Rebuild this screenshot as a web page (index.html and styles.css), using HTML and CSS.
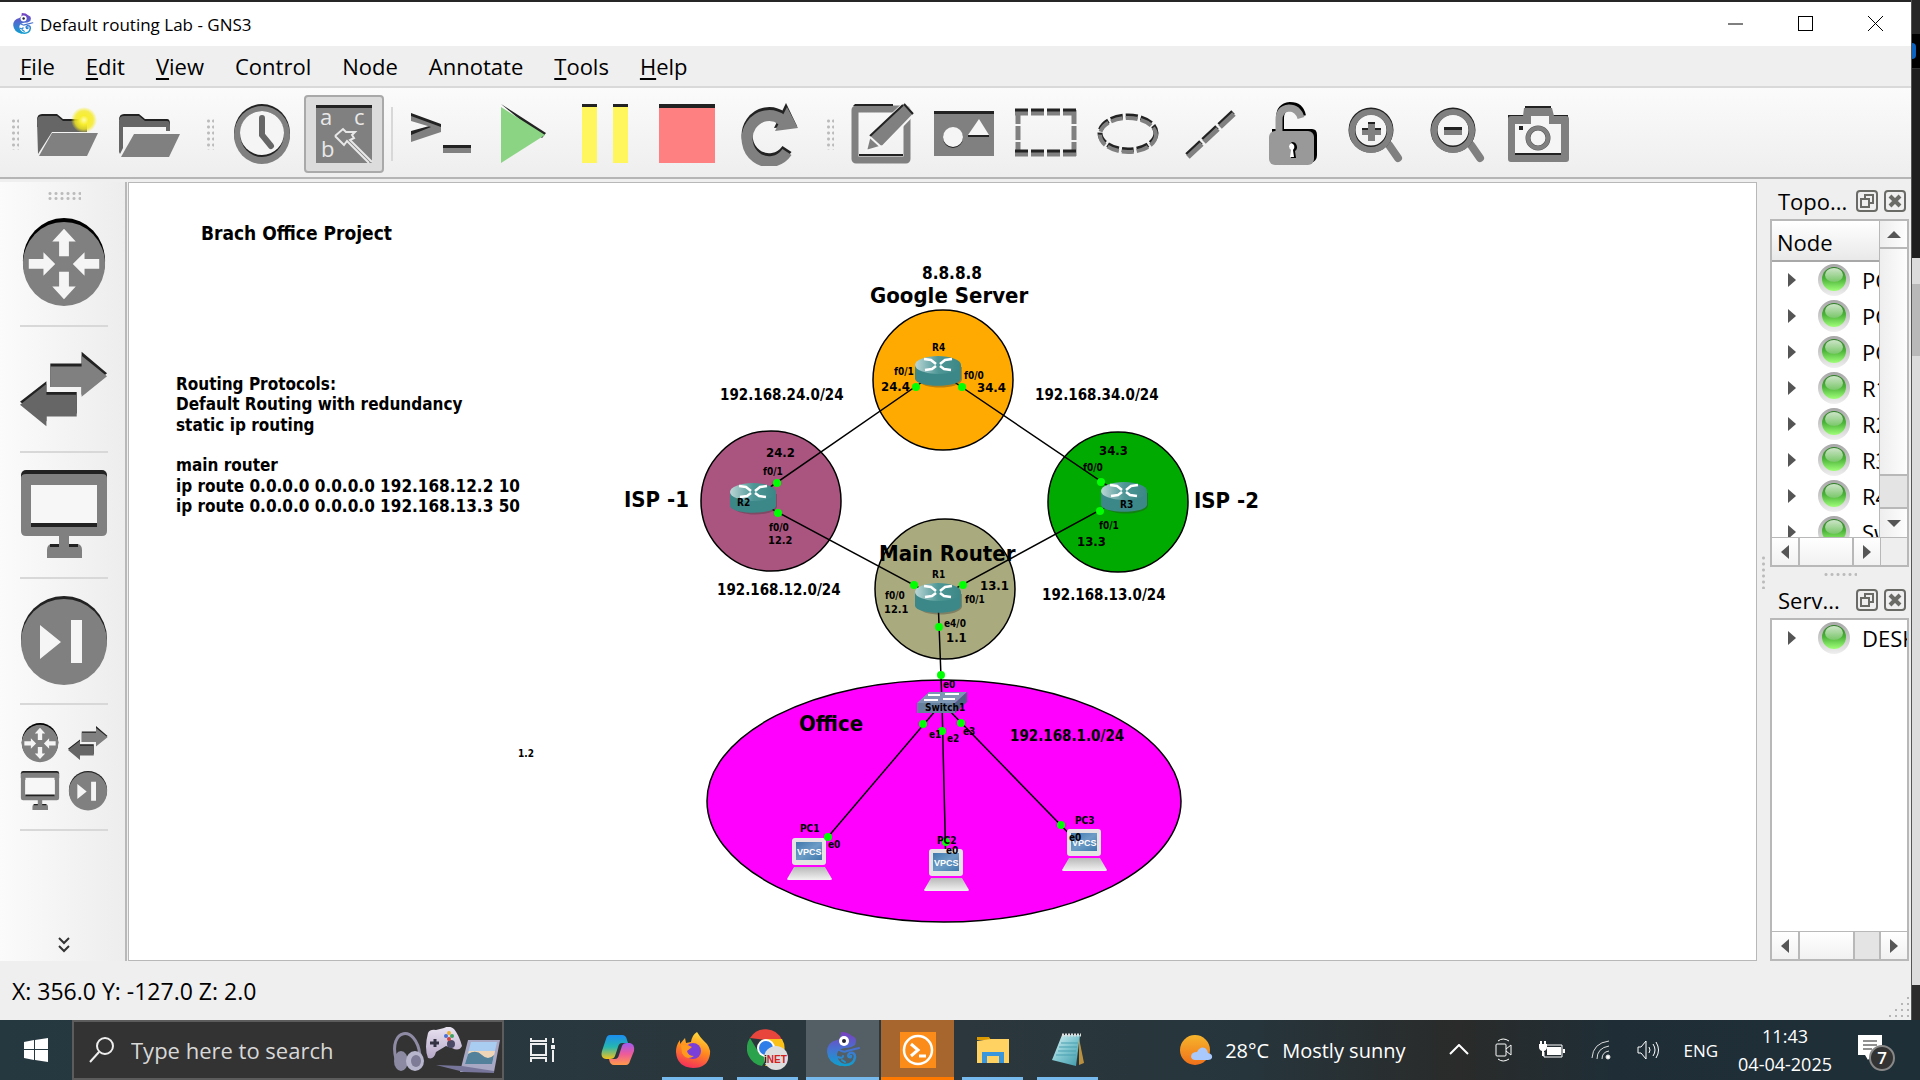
FILE: index.html
```html
<!DOCTYPE html>
<html lang="en">
<head>
<meta charset="utf-8">
<title>Default routing Lab - GNS3</title>
<link rel="stylesheet" href="styles.css">
</head>
<body>
<svg class="defs" aria-hidden="true">
  <defs>
    <linearGradient id="gCham" gradientUnits="userSpaceOnUse" x1="0" y1="0" x2="0" y2="36"><stop offset="0" stop-color="#7a3fc0"/><stop offset=".45" stop-color="#4a6fd0"/><stop offset="1" stop-color="#08a5cf"/></linearGradient>
    <linearGradient id="gRouter" x1="0" y1="0" x2="1" y2="0"><stop offset="0" stop-color="#bcd6d6"/><stop offset=".5" stop-color="#4f9797"/><stop offset="1" stop-color="#3b8686"/></linearGradient>
    <linearGradient id="gLed" x1="0" y1="0" x2="0" y2="1"><stop offset="0" stop-color="#2f7d27"/><stop offset=".5" stop-color="#4db53a"/><stop offset="1" stop-color="#a0ff7a"/></linearGradient>
    <linearGradient id="gShine" x1="0" y1="0" x2="0" y2="1"><stop offset="0" stop-color="#e8f5e4"/><stop offset="1" stop-color="#7fc870"/></linearGradient>
    <linearGradient id="gRing" x1="0" y1="0" x2="0" y2="1"><stop offset="0" stop-color="#a6a6a6"/><stop offset="1" stop-color="#efefef"/></linearGradient>
    <linearGradient id="gScreen" x1="0" y1="0" x2="1" y2="1"><stop offset="0" stop-color="#3f78ad"/><stop offset=".5" stop-color="#6c9cc6"/><stop offset="1" stop-color="#3f78ad"/></linearGradient>
    <linearGradient id="gBase" x1="0" y1="0" x2="0" y2="1"><stop offset="0" stop-color="#b9b9b9"/><stop offset="1" stop-color="#f2f2f2"/></linearGradient>
    <radialGradient id="gGlow"><stop offset="0" stop-color="#fffbb0"/><stop offset=".35" stop-color="#f8ee30"/><stop offset=".7" stop-color="#f5ea20" stop-opacity=".8"/><stop offset="1" stop-color="#f5ea20" stop-opacity="0"/></radialGradient>
    <linearGradient id="gSun" x1="0" y1="0" x2="0" y2="1"><stop offset="0" stop-color="#f6b52c"/><stop offset="1" stop-color="#f0701a"/></linearGradient>
    <linearGradient id="gFox" x1=".7" y1="0" x2=".4" y2="1"><stop offset="0" stop-color="#ffdf3c"/><stop offset=".5" stop-color="#ff8a1e"/><stop offset="1" stop-color="#f5305a"/></linearGradient>
    <linearGradient id="gCopA" x1="0" y1="0" x2="0" y2="1"><stop offset="0" stop-color="#1b8df0"/><stop offset=".5" stop-color="#25b6b0"/><stop offset="1" stop-color="#f3c21c"/></linearGradient>
    <linearGradient id="gCopB" x1="0" y1="0" x2="0" y2="1"><stop offset="0" stop-color="#a05af0"/><stop offset=".5" stop-color="#ee5a9a"/><stop offset="1" stop-color="#ff9a4a"/></linearGradient>
    <linearGradient id="gNote" x1="0" y1="0" x2="1" y2="1"><stop offset="0" stop-color="#dff3f6"/><stop offset=".5" stop-color="#7fc6d0"/><stop offset="1" stop-color="#3f98a8"/></linearGradient>
    <linearGradient id="gPad" x1="0" y1="0" x2="0" y2="1"><stop offset="0" stop-color="#eae4f2"/><stop offset="1" stop-color="#b6a8c8"/></linearGradient>

    <symbol id="router" viewBox="0 0 88 92">
      <ellipse cx="44" cy="44" rx="42" ry="44" fill="#000"/><ellipse cx="44" cy="47" rx="42" ry="43" fill="#808080"/>
      <path fill="#f5f5f5" d="M44 11l12 13h-7v15H39V24h-7zM44 83l12-13h-7V55H39v15h-7zM35 47L23 35v7H8v10h15v7zM53 47l12-12v7h15v10H65v7z"/>
    </symbol>
    <symbol id="switch" viewBox="0 0 90 76">
      <path fill="#222" d="M31 12h32V0l26 22-26 22V36H31z"/><path fill="#808080" d="M31 15h32V4l26 21-26 21V36H31z"/>
      <path fill="#222" d="M0 51l27-21v11h31v22H27v8z"/><path fill="#666" d="M0 54l27-21v11h31v22H27v10z"/>
    </symbol>
    <symbol id="monitor" viewBox="0 0 88 90">
      <rect x="1" y="0" width="86" height="20" rx="5" fill="#222"/>
      <path fill="#808080" fill-rule="evenodd" d="M1 8q0-4 5-4h76q5 0 5 4v53q0 5-5 5H49v8h9q4 1 4 6v8H27v-8q0-5 4-6h8v-8H6q-5 0-5-5zM11 15v41h66V15z"/>
      <path fill="#f7f7f7" d="M11 15h66v38H11z"/>
      <path fill="#222" d="M11 53h66v4H11zM30 74h9v3h-9zM49 74h9v3h-9z"/>
    </symbol>
    <symbol id="vcr" viewBox="0 0 88 90">
      <ellipse cx="44" cy="43" rx="43" ry="43" fill="#222"/><ellipse cx="44" cy="46" rx="43" ry="43" fill="#808080"/>
      <path fill="#f5f5f5" d="M20 29l21 17-21 17zM51 24h11v43H51z"/>
    </symbol>
    <symbol id="node-router" viewBox="0 0 48 32">
      <path fill="#333" opacity=".35" d="M3 11v13c3 10 41 10 44 0V11z"/>
      <path fill="#3c8888" d="M0 9v14c2 9 44 9 46 0V9z"/><ellipse cx="23" cy="9" rx="23" ry="9" fill="url(#gRouter)"/>
      <path d="M9 3l7 1 5 4M37 3l-7 1-5 4M10 14l7-1 4-3M36 14l-7-1-4-3" fill="none" stroke="#fff" stroke-width="2.5"/>
    </symbol>
    <symbol id="node-pc" viewBox="0 0 45 42">
      <rect x="5" y="0" width="34" height="27" rx="3" fill="#e4e4e4"/><rect x="9" y="4" width="26" height="18" fill="url(#gScreen)"/>
      <path fill="url(#gBase)" d="M7 29h31l7 12q0 1-2 1H2q-2 0-2-1z"/>
    </symbol>
    <symbol id="led" viewBox="0 0 32 32">
      <circle cx="16" cy="16" r="16" fill="url(#gRing)"/><circle cx="16" cy="15" r="12" fill="url(#gLed)"/><ellipse cx="16" cy="11" rx="9" ry="7" fill="url(#gShine)" opacity=".85"/>
    </symbol>
    <symbol id="gns" viewBox="0 0 36 36">
      <path fill="url(#gCham)" d="M16 0q7 0 11 4 4 1 4 5l-1 4q-4 3-10 3-7 1-8 6 0 6 6 10-1 2-3 2Q3 31 2 20 2 10 12 8q4-1 4-8z"/>
      <g fill="none" stroke="url(#gCham)" stroke-linecap="round"><path d="M10 25q3 8 10 8 9 0 10-8 0-5-5-4-3 2-1 4 2 1 2-1" stroke-width="2.5"/><path d="M13 17q5 4 9 2l12-3M13 25q5 2 5-1M17 28l3 2" stroke-width="2"/></g>
      <circle cx="19" cy="9" r="5" fill="#fff"/><circle cx="19" cy="9" r="2" fill="#223"/>
    </symbol>
    <symbol id="float" viewBox="0 0 22 22"><rect x="1" y="1" width="20" height="20" rx="3" fill="none" stroke="#6a6a66" stroke-width="2"/><path d="M9 9V5h8v8h-4M5 9h8v8H5z" fill="none" stroke="#6a6a66" stroke-width="2"/></symbol>
    <symbol id="close" viewBox="0 0 22 22"><rect x="1" y="1" width="20" height="20" rx="3" fill="none" stroke="#6a6a66" stroke-width="2"/><path d="M6 6l10 10M16 6L6 16" stroke="#6a6a66" stroke-width="4"/></symbol>
  </defs>
</svg>

<div class="desktop">
  <div class="window">
    <header class="titlebar">
      <svg class="app-icon" aria-hidden="true"><use href="#gns"/></svg>
      <h1>Default routing Lab - GNS3</h1>
      <div class="window-buttons">
        <button aria-label="Minimize"><svg width="16" height="16"><path d="M0 8h15" stroke="#000"/></svg></button>
        <button aria-label="Maximize"><svg width="16" height="16"><rect x=".5" y=".5" width="14" height="14" fill="none" stroke="#000"/></svg></button>
        <button aria-label="Close"><svg width="16" height="16"><path d="M0 0l15 15M15 0L0 15" stroke="#000"/></svg></button>
      </div>
    </header>

    <nav class="menubar">
      <button><u>F</u>ile</button><button><u>E</u>dit</button><button><u>V</u>iew</button><button>Control</button><button>Node</button><button>Annotate</button><button><u>T</u>ools</button><button><u>H</u>elp</button>
    </nav>

    <div class="toolbar">
      <span class="grip"></span>
      <div class="tools">
        <button aria-label="New project"><svg viewBox="0 0 64 64"><path fill="#222" d="M2 18q0-6 5-6h15l6 5h22v8H2z"/><path fill="#666" d="M2 19q0-5 5-5h15l6 5h24v11H17L3 52z"/><path fill="#808080" d="M17 31h46L52 54H4z"/><circle cx="49" cy="18" r="13" fill="url(#gGlow)"/></svg></button>
        <button aria-label="Open project"><svg viewBox="0 0 64 64"><path fill="#222" d="M2 18q0-6 5-6h15l6 5h22q3 0 3 5v5h-4v-3H9v-6z"/><path fill="#666" d="M2 19q0-5 5-5h15l6 5h22q3 0 3 5v5h-4v-4H6v21l-3 6-1-2z"/><path fill="#808080" d="M17 32h46L52 55H4z"/></svg></button>
      </div>
      <span class="grip"></span>
      <div class="tools">
        <button aria-label="Snapshots"><svg viewBox="0 0 64 64"><ellipse cx="32" cy="31" rx="28" ry="29" fill="#222"/><ellipse cx="32" cy="33" rx="28" ry="29" fill="#808080"/><ellipse cx="32" cy="32" rx="22" ry="23" fill="#222"/><ellipse cx="32" cy="31" rx="22" ry="22" fill="#f5f5f5"/><path d="M32 16v17l9 11" fill="none" stroke="#666" stroke-width="6" stroke-linecap="round"/></svg></button>
        <button class="pressed" aria-pressed="true" aria-label="Show interface labels"><svg viewBox="0 0 64 64"><path fill="#808080" d="M4 3h56v58H4z"/><path fill="#222" d="M4 3h56v3H4z"/><g fill="#e8e8e8" font-family="Open Sans,sans-serif" font-size="22"><text x="8" y="23">a</text><text x="42" y="23">c</text><text x="9" y="55">b</text></g><path d="M23 34l8-7 3 3h9l-3 3 2 3-4 2 22 22M23 34l9 9 3-4 22 22" fill="none" stroke="#e8e8e8" stroke-width="2"/></svg></button>
      </div>
      <span class="divider"></span>
      <div class="tools">
        <button aria-label="Console"><svg viewBox="0 0 64 64"><path fill="#222" d="M2 11l30 11v6L2 34v-5l22-6L2 17z"/><path fill="#808080" d="M2 14l30 11v5L2 40v-7l20-8L2 19z"/><path fill="#808080" d="M34 43h28v8H34z"/><path fill="#222" d="M34 43h28v3H34z"/></svg></button>
        <button aria-label="Start all"><svg viewBox="0 0 64 64"><path fill="#222" d="M10 2l45 29-4 5z"/><path fill="#8bd484" d="M10 5l44 28-44 28z"/></svg></button>
        <button aria-label="Suspend all"><svg viewBox="0 0 64 64"><path fill="#fff55c" d="M9 2h15v59H9zM40 2h15v59H40z"/><path fill="#222" d="M9 2h15v3H9zM40 2h15v3H40z"/></svg></button>
        <button aria-label="Stop all"><svg viewBox="0 0 64 64"><path fill="#ff8080" d="M4 2h56v59H4z"/><path fill="#222" d="M4 2h56v4H4z"/></svg></button>
        <button aria-label="Reload all"><svg viewBox="0 0 64 64"><path d="M50 47A22 23 0 1 1 45 15" fill="none" stroke="#222" stroke-width="11"/><path fill="#222" d="M49 1l11 23-23 2z"/><path d="M50 50A22 23 0 1 1 45 18" fill="none" stroke="#808080" stroke-width="11"/><path fill="#808080" d="M50 5l11 21-23 3z"/></svg></button>
      </div>
      <span class="grip"></span>
      <div class="tools">
        <button aria-label="Add a note"><svg viewBox="0 0 64 64"><rect x="5" y="7" width="52" height="51" rx="1" fill="none" stroke="#808080" stroke-width="7"/><path fill="#222" d="M5 2h38v2H3zM9 52h44v2H9z"/><path fill="#808080" stroke="#f5f5f5" stroke-width="2" d="M54 1l10 11-31 32-17 5 4-16z"/><path d="M54 2l9 10M53 3L20 34" stroke="#222" stroke-width="2"/><path d="M20 35l11 10" stroke="#f5f5f5" stroke-width="2"/></svg></button>
        <button aria-label="Insert a picture"><svg viewBox="0 0 64 64"><path fill="#808080" d="M2 9h60v45H2z"/><path fill="#222" d="M2 9h60v3H2z"/><circle cx="21" cy="36" r="10" fill="#222"/><circle cx="21" cy="35" r="10" fill="#f5f5f5"/><path fill="#f5f5f5" d="M47 17l10 16H36z"/><path fill="#222" d="M36 33h21v2H36z"/></svg></button>
        <button aria-label="Draw a rectangle"><svg viewBox="0 0 64 64"><g fill="none" stroke-width="5"><path stroke="#808080" d="M1 11h62M1 52h62" stroke-dasharray="13 3"/><path stroke="#808080" d="M4 8v46M60 8v46" stroke-dasharray="14 2"/><path stroke="#222" stroke-width="3" d="M1 8h62M1 49h62" stroke-dasharray="13 3"/></g></svg></button>
        <button aria-label="Draw an ellipse"><svg viewBox="0 0 64 64"><g fill="none" stroke-width="5" stroke-dasharray="12 3"><ellipse cx="32" cy="31" rx="28" ry="17" stroke="#222"/><ellipse cx="32" cy="33" rx="28" ry="17" stroke="#808080" stroke-width="4"/></g></svg></button>
        <button aria-label="Draw a line"><svg viewBox="0 0 64 64"><path d="M9 53L55 10" stroke="#222" stroke-width="5" stroke-dasharray="19 3"/><path d="M10 55L56 12" stroke="#808080" stroke-width="5" stroke-dasharray="19 3"/></svg></button>
        <button aria-label="Lock all items"><svg viewBox="0 0 64 64"><path d="M20 30V16q0-11 10-12 10 0 12 10" fill="none" stroke="#000" stroke-width="8"/><path fill="#000" d="M12 27h40q5 0 5 6v20q0 6-6 8H12z"/><path d="M19 32V18q0-11 10-12 9 0 12 10" fill="none" stroke="#999" stroke-width="7"/><rect x="9" y="29" width="45" height="34" rx="6" fill="#999"/><path fill="#000" d="M32 40a5 5 0 0 1 3 9l1 7h-5l1-7a5 5 0 0 1 0-9z"/><path fill="#fff" d="M31 41a4 4 0 0 1 2 7l1 7h-4l1-7a4 4 0 0 1 0-7z"/></svg></button>
        <button aria-label="Zoom in"><svg viewBox="0 0 64 64"><path d="M47 43l9 13" stroke="#808080" stroke-width="8" stroke-linecap="round"/><circle cx="29" cy="28" r="19" fill="none" stroke="#222" stroke-width="7"/><circle cx="29" cy="29" r="19" fill="none" stroke="#808080" stroke-width="6"/><path fill="#808080" d="M26 20h7v6h6v7h-6v6h-7v-6h-6v-7h6z"/><path fill="#222" d="M26 20h7v2h-7zM20 26h6v2h-6zM33 26h6v2h-6z"/></svg></button>
        <button aria-label="Zoom out"><svg viewBox="0 0 64 64"><path d="M47 43l9 13" stroke="#808080" stroke-width="8" stroke-linecap="round"/><circle cx="29" cy="28" r="19" fill="none" stroke="#222" stroke-width="7"/><circle cx="29" cy="29" r="19" fill="none" stroke="#808080" stroke-width="6"/><path fill="#808080" d="M20 25h18v8H20z"/><path fill="#222" d="M20 25h18v3H20z"/></svg></button>
        <button aria-label="Screenshot"><svg viewBox="0 0 64 64"><path fill="#222" d="M19 4h26v5H19zM2 13h60v8H2z"/><path fill="#808080" fill-rule="evenodd" d="M18 6h28l2 8h12q3 0 3 3v40q0 3-3 3H5q-3 0-3-3V17q0-3 3-3h12zM9 22v30h46V22H43v-8H25v8z"/><path fill="#f5f5f5" d="M9 22h46v29H9zM25 14h18v10H25z"/><path fill="#222" d="M9 51h46v2H9zM13 24h4v4h-4z"/><circle cx="32" cy="36" r="10" fill="none" stroke="#555" stroke-width="5"/><circle cx="32" cy="36" r="10" fill="none" stroke="#808080" stroke-width="4"/></svg></button>
      </div>
    </div>

    <main class="workspace">
      <aside class="devices">
        <span class="grip wide"></span>
        <button aria-label="Routers"><svg><use href="#router"/></svg></button>
        <button aria-label="Switches"><svg><use href="#switch"/></svg></button>
        <button aria-label="End devices"><svg><use href="#monitor"/></svg></button>
        <button aria-label="Security devices"><svg><use href="#vcr"/></svg></button>
        <button class="all" aria-label="All devices"><svg><use href="#router"/></svg><svg><use href="#switch"/></svg><svg><use href="#monitor"/></svg><svg><use href="#vcr"/></svg></button>
        <svg class="more" viewBox="0 0 12 16"><path d="M1 1l5 5 5-5M1 9l5 5 5-5" fill="none" stroke="#333" stroke-width="2"/></svg>
      </aside>

      <section class="canvas" aria-label="Topology">
        <svg class="scene">
          <g transform="translate(-129 -183)">
            <g stroke="#000" stroke-width="1.5">
              <circle cx="943" cy="380" r="70" fill="#ffaa00"/>
              <circle cx="771" cy="501" r="70" fill="#aa557f"/>
              <circle cx="1118" cy="502" r="70" fill="#00aa00"/>
              <circle cx="945" cy="589" r="70" fill="#aaaa7f"/>
              <ellipse cx="944" cy="801" rx="237" ry="121" fill="#ff00ff"/>
              <path d="M938 371L753 499L938 598L1124 497L938 371M938 598L942 703L810 858M942 703L946 870M942 703L1085 850" fill="none"/>
            </g>
            <use href="#node-router" x="915" y="356" width="48" height="32"/>
            <use href="#node-router" x="730" y="483" width="48" height="32"/>
            <use href="#node-router" x="1101" y="482" width="48" height="32"/>
            <use href="#node-router" x="915" y="583" width="48" height="32"/>
            <g><path fill="#7d96b4" d="M929 692h38l-12 11h-38z"/><path fill="#66829f" d="M917 703h38v10h-38z"/><path fill="#4b6580" d="M955 703l12-11v10l-12 11z"/><path d="M928 695h12M945 694h14M924 700h14M943 699h12" stroke="#fff" stroke-width="2"/></g>
            <use href="#node-pc" x="787" y="838" width="45" height="42"/>
            <use href="#node-pc" x="924" y="849" width="45" height="42"/>
            <use href="#node-pc" x="1062" y="829" width="45" height="42"/>
            <g class="vpcs"><text x="797" y="855">VPCS</text><text x="934" y="866">VPCS</text><text x="1072" y="846">VPCS</text></g>
            <g fill="#00ff00">
              <circle cx="916" cy="387" r="4"/><circle cx="962" cy="387" r="4"/><circle cx="777" cy="483" r="4"/><circle cx="778" cy="513" r="4"/><circle cx="1101" cy="482" r="4"/><circle cx="1100" cy="511" r="4"/><circle cx="914" cy="585" r="4"/><circle cx="963" cy="585" r="4"/><circle cx="939" cy="627" r="4"/><circle cx="941" cy="675" r="4"/><circle cx="923" cy="724" r="4"/><circle cx="942" cy="731" r="4"/><circle cx="961" cy="723" r="4"/><circle cx="828" cy="837" r="4"/><circle cx="946" cy="842" r="4"/><circle cx="1061" cy="825" r="4"/>
            </g>
            <g class="t-xl"><text x="870" y="303">Google Server</text><text x="624" y="507">ISP -1</text><text x="1194" y="508">ISP -2</text><text x="879" y="561">Main Router</text><text x="799" y="731">Office</text></g>
            <g class="t-lg"><text x="201" y="240">Brach Office Project</text></g>
            <g class="t-md"><text x="922" y="279">8.8.8.8</text><text x="176" y="390">Routing Protocols:</text><text x="176" y="410">Default Routing with redundancy</text><text x="176" y="431">static ip routing</text><text x="176" y="471">main router</text><text x="176" y="492">ip route 0.0.0.0 0.0.0.0 192.168.12.2 10</text><text x="176" y="512">ip route 0.0.0.0 0.0.0.0 192.168.13.3 50</text></g>
            <g class="t-ip"><text x="720" y="400">192.168.24.0/24</text><text x="1035" y="400">192.168.34.0/24</text><text x="717" y="595">192.168.12.0/24</text><text x="1042" y="600">192.168.13.0/24</text><text x="1010" y="741">192.168.1.0/24</text></g>
            <g class="t-sm"><text x="881" y="391">24.4</text><text x="977" y="392">34.4</text><text x="766" y="457">24.2</text><text x="1099" y="455">34.3</text><text x="1077" y="546">13.3</text><text x="980" y="590">13.1</text><text x="946" y="642">1.1</text></g>
            <g class="t-xs"><text x="768" y="544">12.2</text><text x="884" y="613">12.1</text></g>
            <g class="t-port"><text x="932" y="351">R4</text><text x="894" y="375">f0/1</text><text x="964" y="379">f0/0</text><text x="763" y="475">f0/1</text><text x="769" y="531">f0/0</text><text x="737" y="506">R2</text><text x="1083" y="471">f0/0</text><text x="1120" y="508">R3</text><text x="1099" y="529">f0/1</text><text x="932" y="578">R1</text><text x="885" y="599">f0/0</text><text x="965" y="603">f0/1</text><text x="944" y="627">e4/0</text><text x="943" y="688">e0</text><text x="925" y="711">Switch1</text><text x="929" y="738">e1</text><text x="947" y="742">e2</text><text x="963" y="735">e3</text><text x="800" y="832">PC1</text><text x="828" y="848">e0</text><text x="937" y="844">PC2</text><text x="946" y="854">e0</text><text x="1075" y="824">PC3</text><text x="1069" y="841">e0</text><text x="518" y="757">1.2</text></g>
          </g>
        </svg>
      </section>

      <span class="splitter"><span class="grip line"></span></span>

      <aside class="docks">
        <section class="dock topology">
          <header><h2>Topo...</h2><button aria-label="Float"><svg><use href="#float"/></svg></button><button aria-label="Close"><svg><use href="#close"/></svg></button></header>
          <div class="panel">
            <div class="view">
              <div class="list">
                <h3>Node</h3>
                <ul>
                  <li><i></i><svg><use href="#led"/></svg>PC1</li><li><i></i><svg><use href="#led"/></svg>PC2</li><li><i></i><svg><use href="#led"/></svg>PC3</li><li><i></i><svg><use href="#led"/></svg>R1</li><li><i></i><svg><use href="#led"/></svg>R2</li><li><i></i><svg><use href="#led"/></svg>R3</li><li><i></i><svg><use href="#led"/></svg>R4</li><li><i></i><svg><use href="#led"/></svg>Switch1</li>
                </ul>
              </div>
              <div class="vbar"><button class="up" aria-label="Scroll up"></button><span class="track"></span><span class="groove"></span><button class="down" aria-label="Scroll down"></button></div>
            </div>
            <div class="hbar"><button class="left" aria-label="Scroll left"></button><span class="track"></span><button class="right" aria-label="Scroll right"></button><span class="corner"></span></div>
          </div>
        </section>
        <span class="handle"><span class="grip row"></span></span>
        <section class="dock servers">
          <header><h2>Serv...</h2><button aria-label="Float"><svg><use href="#float"/></svg></button><button aria-label="Close"><svg><use href="#close"/></svg></button></header>
          <div class="panel">
            <div class="view"><div class="list"><ul><li><i></i><svg><use href="#led"/></svg>DESKTOP</li></ul></div></div>
            <div class="hbar"><button class="left" aria-label="Scroll left"></button><span class="track"></span><span class="groove"></span><button class="right" aria-label="Scroll right"></button></div>
          </div>
        </section>
      </aside>
    </main>

    <footer class="status">X: 356.0 Y: -127.0 Z: 2.0
      <svg width="24" height="24" fill="#b5b5b5"><path d="M20 1h2v2h-2zM14 7h2v2h-2zM20 7h2v2h-2zM8 13h2v2H8zM14 13h2v2h-2zM20 13h2v2h-2zM2 19h2v2H2zM8 19h2v2H8zM14 19h2v2h-2zM20 19h2v2h-2z"/></svg>
    </footer>
  </div>
  <div class="behind"><span class="tabs"></span><span class="address"><i></i></span><span class="bar"></span><span class="page"><i></i></span><span class="foot"></span></div>
</div>

<footer class="taskbar">
  <button class="start" aria-label="Start"><svg width="24" height="24" fill="#fff"><path d="M0 4l10-2v9H0zM11 2l13-2v11H11zM0 12h10v10L0 20zM11 12h13v12l-13-2z"/></svg></button>
  <label class="search">
    <svg width="26" height="26" fill="none" stroke="#eee" stroke-width="2"><circle cx="16" cy="9" r="8"/><path d="M10 15L1 25"/></svg>
    <input type="text" placeholder="Type here to search" aria-label="Type here to search">
    <svg width="108" height="46" viewBox="0 0 108 46">
      <path d="M4 32C-4 2 24-4 28 28" fill="none" stroke="#8f8ba5" stroke-width="3"/><ellipse cx="9" cy="34" rx="7" ry="10" fill="#8b8aa2"/><ellipse cx="23" cy="34" rx="9" ry="10" fill="#b8b6cc"/><ellipse cx="24" cy="34" rx="5" ry="6" fill="#7d7b95"/>
      <path fill="url(#gPad)" d="M36 6q2-4 8-3l8-2q5-3 10 1 5 6 8 17-3 6-10 2l-6-2-10 6q-2 8-8 6-4-10 0-25z"/><path d="M38 16h9M43 12v8" stroke="#334" stroke-width="3"/><circle cx="59" cy="17" r="4" fill="#4a4a66"/><circle cx="57" cy="6" r="2" fill="#e8b030"/><circle cx="60" cy="9" r="2" fill="#40a060"/><circle cx="54" cy="9" r="2" fill="#4a70d0"/><circle cx="57" cy="12" r="2" fill="#d04040"/>
      <path fill="#a8a8c4" d="M76 13h32l-6 32H68z"/><path fill="#a9cdf0" d="M79 15h26l-5 22H73z"/><path fill="#f0d6b8" d="M77 24h26l-2 8H75z"/><path fill="#53809a" d="M76 27q8-5 14 1t12 0l-2 9H73z"/><path fill="#77769a" d="M44 38l26 1 32 5v2l-30-1z"/>
    </svg>
  </label>
  <div class="apps">
    <button aria-label="Task View"><svg width="26" height="24" fill="none" stroke="#eee" stroke-width="2"><path d="M1 0v3h15V0M1 24v-4h15v4M1 6h15v11H1zM23 0v5M23 12v12"/><path fill="#eee" stroke="none" d="M21 7h4v4h-4z"/></svg></button>
    <button aria-label="Copilot"><svg width="34" height="32"><path fill="url(#gCopA)" d="M9 1h12q4 0 5 5l1 3h-6q-3 0-4 4l-3 9q-1 3-5 3H5q-6-1-4-8l4-12Q6 1 9 1z"/><path fill="url(#gCopB)" d="M25 31H13q-4 0-5-6h6q3 0 4-4l3-9q1-3 5-3h3q5 1 4 8l-4 10q-1 4-4 4z"/></svg></button>
    <button class="open" aria-label="Firefox"><svg width="36" height="36"><path fill="url(#gFox)" d="M22 0q3 5 6 8 8 7 7 14-2 14-17 14Q2 35 1 20q0-7 4-12v4l5-6 1 5 5-1q1-7 6-10z"/><circle cx="18" cy="19" r="8" fill="#7a3fd8"/><path fill="#ff9a1e" d="M6 13q6-1 11 2l-5 4q1 5 7 5-8 5-12-3z"/></svg></button>
    <button class="open" aria-label="Chrome"><svg width="42" height="42"><path fill="#e8453c" d="M3 9a18 18 0 0 1 32 2H18z"/><path fill="#fbc116" d="M35 10a18 18 0 0 1-17 27l8-15-7-12z"/><path fill="#2ba24c" d="M3 9l9 15 8 5-5 8A18 18 0 0 1 3 9z"/><circle cx="19" cy="19" r="9" fill="#fff"/><circle cx="19" cy="19" r="7" fill="#2f7de8"/><circle cx="29" cy="29" r="12" fill="#ddd"/><text x="17" y="34" font-family="Liberation Sans,sans-serif" font-size="10" font-weight="700" fill="#d02020"><tspan fill="#111">i</tspan>NET</text></svg></button>
    <button class="open active" aria-label="GNS3"><svg width="36" height="36"><use href="#gns"/></svg></button>
    <button class="open console" aria-label="Console"><svg width="36" height="36"><path fill="#fb8c1a" d="M0 0h36v36H0z"/><circle cx="18" cy="18" r="14" fill="none" stroke="#fff" stroke-width="2.5"/><path d="M11 12l7 6-7 6M19 24h7" fill="none" stroke="#fff" stroke-width="3"/></svg></button>
    <button class="open" aria-label="File Explorer"><svg width="34" height="28"><path fill="#dc9a00" d="M1 1h12l2 3H1z"/><path fill="#ffd262" d="M1 5l14-2h18v24H1z"/><path fill="#3a96dc" d="M6 27V16h22v11h-5v-7H11v7z"/></svg></button>
    <button class="open" aria-label="Notepad"><svg width="36" height="34"><path fill="#b89040" d="M29 5l5 25-5 2z"/><path fill="url(#gNote)" d="M12 2h18l-4 31L2 27z"/><path d="M12 2h19" stroke="#ddd" stroke-width="3" stroke-dasharray="2 1"/><path d="M11 10h17M9 14h18M8 18h18M6 22h20" stroke="#4a9fb0"/></svg></button>
  </div>
  <button class="weather"><svg width="36" height="34"><circle cx="16" cy="17" r="15" fill="url(#gSun)"/><path fill="#a9c8fb" d="M16 27q-3 0-4-3 0-5 6-5 3-6 8-4 3 2 3 5 5 1 4 5-1 2-4 2z"/></svg><span>28°C</span><span>Mostly sunny</span></button>
  <div class="tray">
    <button aria-label="Show hidden icons"><svg width="20" height="12"><path d="M1 10l9-9 9 9" fill="none" stroke="#fff" stroke-width="2"/></svg></button>
    <button aria-label="Meet now"><svg width="18" height="24" fill="none" stroke="#fff"><rect x="1" y="6" width="10" height="12" rx="1"/><path d="M11 11l5-4v10l-5-4M3 3q5-4 11 0M3 21q5 4 11 0"/></svg></button>
    <button aria-label="Battery"><svg width="26" height="20"><path d="M7 5h16v12H5v-5" fill="none" stroke="#fff"/><path fill="#fff" d="M8 7h14v8H8zM24 9h2v4h-2zM0 4h8v3q0 3-3 4v5H3v-5Q0 10 0 7zM1 1h2v3H1zM5 1h2v3H5z"/></svg></button>
    <button aria-label="Network"><svg width="20" height="20" fill="none" stroke="#ddd"><path d="M1 18Q2 3 18 1M6 19Q6 8 18 6M11 19q0-7 7-8"/><circle cx="17" cy="17" r="2" fill="#fff"/></svg></button>
    <button aria-label="Volume"><svg width="24" height="20" fill="none" stroke="#fff"><path d="M1 7h3l5-6v18l-5-6H1zM12 7q2 3 0 6M16 4q4 6 0 12M19 2q5 8 0 16"/></svg></button>
    <button class="lang">ENG</button>
    <button class="clock"><span>11:43</span><span>04-04-2025</span></button>
    <button class="notify" aria-label="Notifications"><svg width="26" height="30"><path fill="#fff" d="M0 0h24v20H14l-4 5-3-5H0z"/><path d="M5 6h14M5 10h14M5 14h9" stroke="#222"/></svg><b>7</b></button>
  </div>
</footer>
</body>
</html>
```
FILE: styles.css
```css
* { box-sizing: border-box; }

body {
  margin: 0;
  height: 100vh;
  display: flex;
  flex-direction: column;
  overflow: hidden;
  background: #262626;
  color: #000;
  font-family: "Open Sans", "Noto Sans", sans-serif;
  font-size: 22px;
}

button {
  border: 0;
  padding: 0;
  background: none;
  color: inherit;
  font: inherit;
}

svg { display: block; flex: none; }
h1, h2, h3, ul { margin: 0; padding: 0; font-weight: 400; font-size: inherit; list-style: none; }
.defs { position: absolute; width: 0; height: 0; }

.desktop { flex: 1; min-height: 0; display: flex; }
.window { flex: 1; min-width: 0; margin-top: 2px; display: flex; flex-direction: column; background: #efefef; }

/* title bar and menus */
.titlebar { height: 44px; display: flex; align-items: center; background: #fff; padding-left: 12px; }
.titlebar h1 { font-size: 17px; margin-left: 6px; flex: 1; }
.app-icon { width: 22px; height: 24px; }
.window-buttons { display: flex; }
.window-buttons button { width: 70px; height: 44px; display: grid; place-items: center; }

.menubar { height: 42px; display: flex; gap: 31px; padding: 0 20px; align-items: center; border-bottom: 2px solid #d9d9d9; }
.menubar button { line-height: 30px; }
.menubar u { text-underline-offset: 3px; text-decoration-thickness: 2px; }

/* toolbar */
.toolbar { height: 91px; display: flex; align-items: center; padding: 3px 0 0 11px; background: linear-gradient(#fbfbfb, #eeeeee); border-bottom: 2px solid #b5b5b5; }
.tools { display: flex; gap: 2px; margin: 0 17px 0 8px; }
.tools button { width: 80px; height: 78px; display: grid; place-items: center; border-radius: 4px; }
.tools svg { width: 64px; height: 64px; }
.tools .pressed { background: #dcdcdc; border: 2px solid #a9a9a9; }
.tools:has(.pressed) { margin-right: 7px; }
.divider { width: 2px; height: 54px; background: #d8d8d8; }
.grip { flex: none; width: 8px; height: 32px; background: radial-gradient(circle, #bbb 1px, transparent 2px) 0 0 / 5px 6px; }
.grip.wide { width: 34px; height: 10px; background-size: 6px 5px; }
.grip.row { width: 34px; height: 5px; background-size: 6px 5px; }
.grip.line { width: 5px; height: 34px; }

/* workspace */
.workspace { flex: 1; min-height: 0; display: flex; padding-top: 3px; }
.devices { width: 127px; display: flex; flex-direction: column; align-items: center; padding: 9px 0 0 2px; background: linear-gradient(90deg, #fbfbfb, #ededed); border-right: 2px solid #b8b8b8; }
.devices button { width: 88px; height: 126px; display: grid; place-items: center; border-bottom: 2px solid #d8d8d8; }
.devices svg { width: 88px; height: 90px; }
.devices .all { grid-template-columns: 40px 40px; justify-content: space-between; align-content: center; gap: 8px; }
.devices .all svg { width: 40px; height: 40px; }
.devices .more { width: 12px; height: 16px; margin: auto 0 8px; }

.canvas { flex: 1; min-width: 0; margin-left: 1px; border: 1px solid #b8b8b8; background: #fff; }
.scene { width: 100%; height: 100%; font-family: "DejaVu Sans Condensed", "Open Sans", sans-serif; font-weight: 700; }
.t-xl { font-size: 22px; }
.t-lg { font-size: 19px; }
.t-md { font-size: 17px; }
.t-ip { font-size: 15px; }
.t-sm { font-size: 13px; }
.t-xs { font-size: 11px; }
.t-port { font-size: 10px; }
.vpcs { font-family: "Liberation Sans", sans-serif; font-size: 9px; fill: #fff; }

.splitter { width: 13px; display: grid; place-items: center; }

/* docks */
.docks { width: 141px; padding-right: 2px; display: flex; flex-direction: column; }
.dock { display: flex; flex-direction: column; min-height: 0; }
.topology { flex: 385 0 0; }
.servers { flex: 380 0 0; }
.dock header { height: 37px; display: flex; align-items: center; gap: 6px; padding: 0 3px 0 8px; }
.dock h2 { flex: 1; }
.dock header svg { width: 22px; height: 22px; }
.handle { height: 14px; display: grid; place-items: center; }
.panel { flex: 1; min-height: 0; border: 2px solid #b8b8b8; background: #fff; display: flex; flex-direction: column; }
.view { flex: 1; min-height: 0; display: flex; }
.list { flex: 1; min-width: 0; overflow: hidden; }
.list h3 { height: 41px; line-height: 42px; padding-left: 5px; background: linear-gradient(#fff, #e9e9e9); border-bottom: 2px solid #a8a8a8; }
.list li { height: 36px; display: flex; align-items: center; white-space: nowrap; padding-left: 16px; }
.list i { border: 7px solid transparent; border-left: 8px solid #555; border-right: 0; margin-right: 22px; }
.list svg { width: 32px; height: 32px; margin-right: 12px; }

.vbar { width: 28px; display: flex; flex-direction: column; border-left: 1px solid #b8b8b8; background: linear-gradient(90deg, #eee, #fdfdfd); }
.hbar { height: 28px; display: flex; border-top: 1px solid #b8b8b8; background: linear-gradient(#fff, #f1f1f1); }
.track { flex: 1; }
.groove { background: #e4e4e4; }
.vbar .groove { height: 35px; border: solid #b8b8b8; border-width: 2px 0; }
.hbar .groove { width: 26px; border-left: 2px solid #b8b8b8; }
.vbar button { height: 28px; display: grid; place-items: center; }
.hbar button { width: 28px; display: grid; place-items: center; }
.vbar button::before, .hbar button::before { content: ""; border: 7px solid transparent; }
.up { border-bottom: 2px solid #b8b8b8; }
.left { border-right: 2px solid #b8b8b8; }
.right { border-left: 2px solid #b8b8b8; }
.vbar .up::before { border-width: 0 7px 7px; border-bottom-color: #555; }
.vbar .down::before { border-width: 7px 7px 0; border-top-color: #555; }
.hbar .left::before { border-width: 7px 8px 7px 0; border-right-color: #555; }
.hbar .right::before { border-width: 7px 0 7px 8px; border-left-color: #555; }
.corner { width: 27px; background: #eee; border-left: 1px solid #b8b8b8; }

.status { height: 59px; display: flex; align-items: center; justify-content: space-between; padding-left: 12px; font-size: 23px; }
.status svg { align-self: flex-end; }

/* sliver of the browser window behind */
.behind { width: 9px; display: flex; flex-direction: column; background: #1f1f1f; border-left: 1px solid #555; }
.tabs { height: 34px; background: #272727; }
.address { height: 34px; background: #000; padding-top: 9px; }
.address i { display: block; width: 4px; height: 16px; background: #0a63c0; border-radius: 0 8px 8px 0; }
.bar { height: 190px; border-top: 1px solid #333; }
.page { flex: 1; background: #dcdcdc; padding-top: 26px; }
.page i { display: block; height: 72px; background: #b9b9b9; }
.foot { height: 35px; background: #2b2b2b; }

/* taskbar */
.taskbar { height: 60px; display: flex; color: #fff; background: linear-gradient(90deg, #253840, #2b373c 50%, #26353c 65%, #2a2b2a 76%, #1f2e36 84%, #1f2f38); }
.start { width: 72px; display: grid; place-items: center; }
.search { width: 432px; display: flex; align-items: center; border: 2px solid #5c5c5c; background: #333; padding: 0 2px 0 15px; }
.search input { flex: 1; min-width: 0; margin-left: 16px; border: 0; padding: 0; background: none; color: #fff; font: inherit; }
.search input::placeholder { color: #d8d8d8; opacity: 1; }
.apps { display: flex; gap: 2px; margin-left: 2px; }
.apps button { width: 73px; display: grid; place-items: center; }
.open { background: linear-gradient(#76b9ed, #76b9ed) bottom / 61px 3px no-repeat; }
.apps .active { background: linear-gradient(#76b9ed, #76b9ed) bottom / 100% 3px no-repeat #535f64; }
.apps .console { background: linear-gradient(#ff7800, #ff7800) bottom / 100% 3px no-repeat #a8662f; }
.weather { display: flex; align-items: center; margin-left: auto; font-size: 20px; }
.weather svg { margin-right: 10px; }
.weather span + span { margin-left: 13px; }
.tray { display: flex; align-items: center; gap: 26px; margin-left: 44px; padding-right: 24px; }
.lang { font-size: 17px; margin: 0 -6px 0 -4px; }
.clock { display: flex; flex-direction: column; align-items: center; font-size: 18px; line-height: 28px; }
.notify { position: relative; width: 38px; }
.notify b { position: absolute; left: 11px; top: 10px; width: 26px; height: 26px; line-height: 22px; border: 2px solid #888; border-radius: 50%; background: #333; font-size: 17px; font-weight: 600; }
```
